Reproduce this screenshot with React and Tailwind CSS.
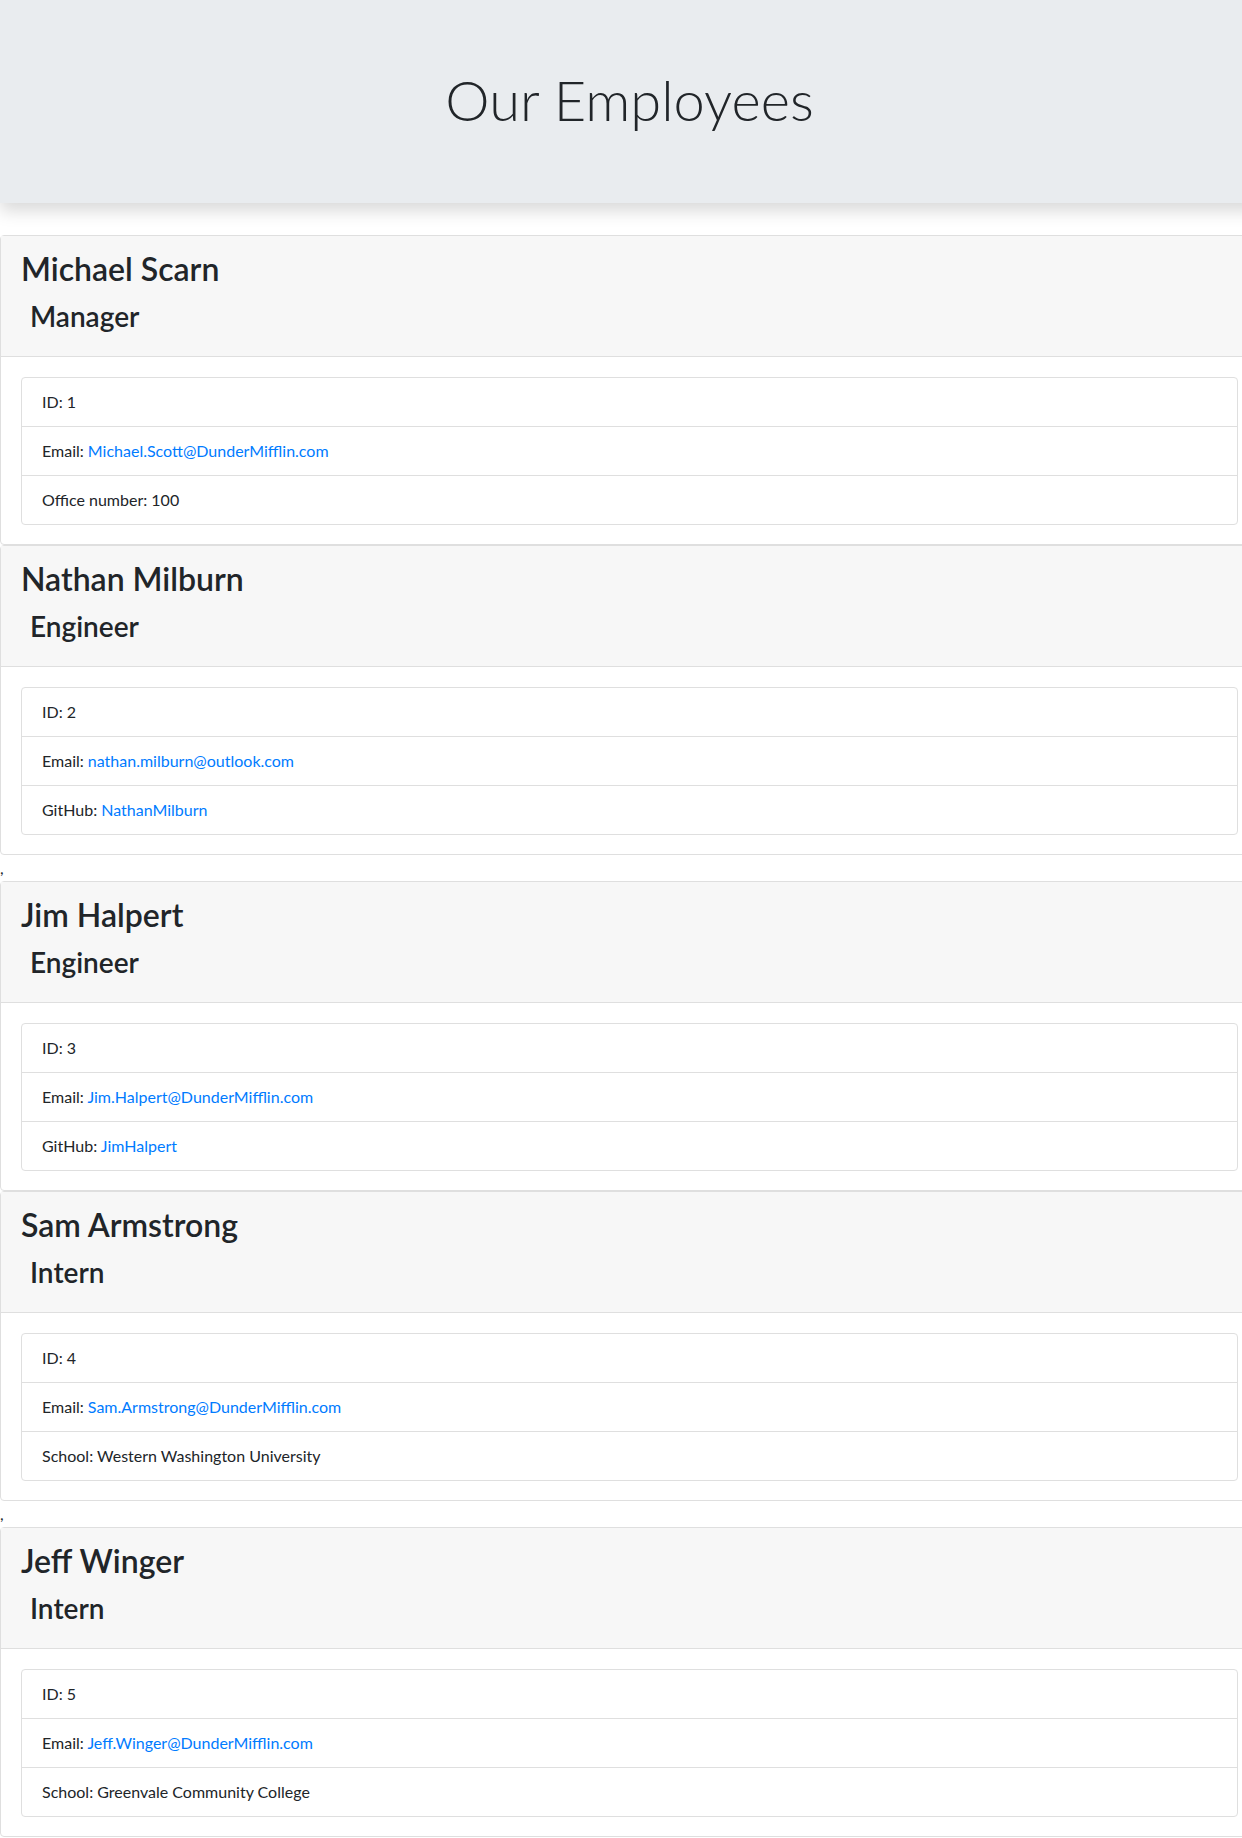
// App.jsx - team roster page
import React from "react";

const EMPLOYEES = [
  { id: 1, name: "Michael Scarn", role: "Manager", email: "Michael.Scott@DunderMifflin.com", extra: { label: "Office number", value: "100" } },
  { id: 2, name: "Nathan Milburn", role: "Engineer", email: "nathan.milburn@outlook.com", extra: { label: "GitHub", value: "NathanMilburn", link: true } },
  { id: 3, name: "Jim Halpert", role: "Engineer", email: "Jim.Halpert@DunderMifflin.com", extra: { label: "GitHub", value: "JimHalpert", link: true } },
  { id: 4, name: "Sam Armstrong", role: "Intern", email: "Sam.Armstrong@DunderMifflin.com", extra: { label: "School", value: "Western Washington University" } },
  { id: 5, name: "Jeff Winger", role: "Intern", email: "Jeff.Winger@DunderMifflin.com", extra: { label: "School", value: "Greenvale Community College" } },
];

// 分隔用的逗號（原頁面陣列 join 留下的）
const SEPARATOR_AFTER = [2, 4];

const EmployeeCard = ({ emp }) => (
  <div className="border border-[#dfdfdf] rounded-[4px] bg-white">
    <div className="bg-[#f7f7f7] border-b border-[#dfdfdf] px-[20px] pt-[12px] pb-[23px]">
      <h2 className="text-[32px] leading-[41px] font-semibold">{emp.name}</h2>
      <h3 className="text-[28px] leading-[34px] font-semibold mt-[10px] ml-[9px]">{emp.role}</h3>
    </div>
    <div className="px-[20px] pt-[20px] pb-[19px]">
      <ul className="border border-[#dfdfdf] rounded-[4px] divide-y divide-[#dfdfdf] text-[16px] leading-[24px]">
        <li className="px-[20px] py-[12px]">ID: {emp.id}</li>
        <li className="px-[20px] py-[12px]">
          Email: <a href={`mailto:${emp.email}`} className="text-[#007bff]">{emp.email}</a>
        </li>
        <li className="px-[20px] py-[12px]">
          {emp.extra.label}:{" "}
          {emp.extra.link ? (
            <a href={`https://github.com/${emp.extra.value}`} className="text-[#007bff]">{emp.extra.value}</a>
          ) : (
            emp.extra.value
          )}
        </li>
      </ul>
    </div>
  </div>
);

const App = () => {
  return (
    <div className="w-[1242px] overflow-hidden bg-white">
      <div className="w-[1259px] text-[#212529]" style={{ fontFamily: "Lato, 'Open Sans', sans-serif" }}>
        <header className="h-[203px] bg-[#e9ecef] pt-[66px] shadow-[0_8px_16px_rgba(0,0,0,0.15)] relative">
          <h1 className="text-[56px] leading-[67px] font-light text-center">Our Employees</h1>
        </header>
        <main className="mt-[32px]">
          {EMPLOYEES.map((emp) => (
            <React.Fragment key={emp.id}>
              <EmployeeCard emp={emp} />
              {SEPARATOR_AFTER.includes(emp.id) && (
                <div className="h-[26px] leading-[26px] text-[16px]">,</div>
              )}
            </React.Fragment>
          ))}
        </main>
      </div>
    </div>
  );
};

export default App;
